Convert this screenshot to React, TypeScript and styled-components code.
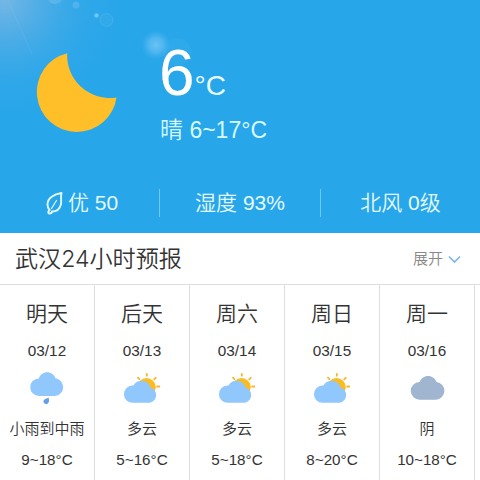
import React from 'react';
import styled, { createGlobalStyle } from 'styled-components';

const GlobalStyle = createGlobalStyle`
  * { box-sizing: border-box; }
  body {
    margin: 0;
    background: #fff;
    font-family: "Liberation Sans", "Noto Sans CJK SC", sans-serif;
    font-weight: 350;
    color: #333;
  }
`;

const Page = styled.main`
  width: 480px;
  height: 480px;
  overflow: hidden;
  display: flex;
  flex-direction: column;
`;

const Hero = styled.section`
  position: relative;
  height: 233px;
  flex: none;
  display: flex;
  flex-direction: column;
  background: #28a6ea;
  color: #e2faff;
`;

const Glow = styled.svg`
  position: absolute;
  inset: 0;
`;

const Current = styled.div`
  position: relative;
  height: 173px;
  display: flex;
  padding: 41px 0 0 36px;
`;

const Moon = styled.svg`
  width: 82px;
  height: 80px;
  margin: 12px 42px 0 0;
  flex: none;
`;

const Reading = styled.div`
  display: flex;
  flex-direction: column;
`;

const Temperature = styled.div`
  display: flex;
  align-items: baseline;
  height: 64px;
  line-height: 64px;
  font-size: 64px;
  color: #fff;
  margin-left: -1px;
`;

const Unit = styled.span`
  font-size: 28px;
  line-height: 28px;
  color: #e9fbff;
`;

const Summary = styled.div`
  margin-top: 10px;
  height: 30px;
  line-height: 30px;
  font-size: 23px;
  color: #d5faff;
  white-space: nowrap;
`;

const Stats = styled.div`
  position: relative;
  display: grid;
  grid-template-columns: 160px 161px 159px;
  height: 28px;
  margin-top: 16px;
`;

const Stat = styled.div`
  display: flex;
  align-items: center;
  justify-content: center;
  gap: 5px;
  line-height: 28px;
  font-size: 21px;
  white-space: nowrap;
  border-right: 1px solid #6ccaf5;
  &:first-child { padding-left: 5px; }
  &:last-child { border-right: 0; }
`;

const Header = styled.header`
  height: 52px;
  flex: none;
  display: flex;
  align-items: center;
  justify-content: space-between;
  padding: 1px 19px 0 15px;
  border-bottom: 1px solid #dedede;
`;

const Title = styled.h1`
  margin: 0;
  font-family: "Inter", "Noto Sans CJK SC", sans-serif;
  font-size: 23.1px;
  line-height: 32px;
  font-weight: 350;
`;

const Expand = styled.button`
  display: flex;
  align-items: center;
  gap: 5px;
  padding: 0;
  border: 0;
  background: none;
  font: inherit;
  font-size: 15px;
  line-height: 20px;
  color: #888;
`;

const Forecast = styled.section`
  display: grid;
  grid-template-columns: repeat(5, 95px) 5px;
  flex: 1;
`;

const Day = styled.article`
  display: flex;
  flex-direction: column;
  align-items: center;
  padding-top: 14px;
  border-right: 1px solid #dedede;
  white-space: nowrap;
`;

const DayName = styled.div`
  font-size: 21px;
  line-height: 30px;
`;

const DateLabel = styled.div`
  margin-top: 12px;
  font-size: 15.3px;
  line-height: 20px;
`;

const WeatherIcon = styled.svg`
  width: 40px;
  height: 36px;
  margin-top: 9px;
`;

const Condition = styled.div`
  margin-top: 13px;
  font-size: 15px;
  line-height: 20px;
`;

const Range = styled.div`
  margin-top: 11px;
  font-size: 15.2px;
  line-height: 20px;
`;

type Kind = 'rain' | 'partly' | 'overcast';

const CLOUD =
  'M10.5 24.5a8.8 8.8 0 0 1-.4-17.6C11.4 3.3 14.7.8 18.5.8s7 2.4 8.3 6a8.9 8.9 0 0 1-.6 17.7Z';

function Weather({ kind }: { kind: Kind }) {
  if (kind === 'partly') {
    return (
      <WeatherIcon viewBox="4.2 0 40 36">
        <g stroke="#fbb52a" strokeWidth="1.8" strokeLinecap="round">
          <path d="M29 3.800v1.900M20.200 7.600l1.400 1.500M38 7.800l-1.600 1.500M41.500 16.500h-2.200" />
        </g>
        <circle cx="28.700" cy="17.300" r="9.200" fill="#fbbc22" />
        <path
          d="M15 32.800A8.600 8.600 0 0 1 14.500 15.600h1.100C17.200 12.400 20.200 10.700 23.800 10.700c4.500 0 8.200 2.800 9 7 3.300 1 5.600 3.800 5.600 7.300 0 4.400-3.500 7.800-8 7.800Z"
          fill="#90c8fd"
        />
      </WeatherIcon>
    );
  }
  if (kind === 'overcast') {
    return (
      <WeatherIcon viewBox="0 0 40 36">
        <path transform="translate(2.200 5.200) scale(1.020 1)" d={CLOUD} fill="#9fb5d0" />
      </WeatherIcon>
    );
  }
  return (
    <WeatherIcon viewBox="0 0 40 36">
      <path transform="translate(1.700 1.500)" d={CLOUD} fill="#90c8fd" />
      <path d="M21.500 27.500c.9 2.400.9 6.500-2.200 6.600-3.500.1-3.800-4.500-.5-5.300 1-.2 1.900-.6 2.700-1.300Z" fill="#659eea" />
    </WeatherIcon>
  );
}

const days: { name: string; date: string; kind: Kind; text: string; range: string }[] = [
  { name: '明天', date: '03/12', kind: 'rain', text: '小雨到中雨', range: '9~18°C' },
  { name: '后天', date: '03/13', kind: 'partly', text: '多云', range: '5~16°C' },
  { name: '周六', date: '03/14', kind: 'partly', text: '多云', range: '5~18°C' },
  { name: '周日', date: '03/15', kind: 'partly', text: '多云', range: '8~20°C' },
  { name: '周一', date: '03/16', kind: 'overcast', text: '阴', range: '10~18°C' },
];

export default function App() {
  return (
    <Page>
      <GlobalStyle />
      <Hero>
        <Glow width="480" height="233" viewBox="0 0 480 233">
          <defs>
            <radialGradient id="corner" gradientUnits="userSpaceOnUse" cx="4" cy="0" r="125">
              <stop offset="0" stopColor="#8fbde4" stopOpacity=".75" />
              <stop offset=".3" stopColor="#74b4e2" stopOpacity=".5" />
              <stop offset=".65" stopColor="#4cace6" stopOpacity=".22" />
              <stop offset="1" stopColor="#28a6ea" stopOpacity="0" />
            </radialGradient>
            <radialGradient id="orb">
              <stop offset="0" stopColor="#8fd2f8" stopOpacity=".65" />
              <stop offset=".5" stopColor="#76c6f5" stopOpacity=".5" />
              <stop offset="1" stopColor="#50b8f0" stopOpacity="0" />
            </radialGradient>
          </defs>
          <rect width="480" height="233" fill="url(#corner)" />
          <path d="M8 0 32 54" stroke="#a8d8f5" strokeOpacity=".14" />
          <circle cx="55" cy="-4" r="8" fill="#9bd2f4" fillOpacity=".25" />
          <circle cx="76" cy="5" r="3.500" fill="#8bcdf5" fillOpacity=".3" />
          <circle cx="96.500" cy="15.500" r="3.500" fill="url(#orb)" />
          <circle cx="96.500" cy="15.500" r="1.800" fill="#6ccbfa" />
          <circle cx="106.500" cy="20" r="6.500" fill="#64b9ed" fillOpacity=".15" stroke="#77c5f1" strokeOpacity=".3" />
          <circle cx="156" cy="45" r="15" fill="url(#orb)" />
          <circle cx="177" cy="52" r="14" fill="#50b8f0" fillOpacity=".18" />
        </Glow>
        <Current>
          <Moon viewBox="36 53 82 80">
            <path d="M67.200 53.200A40 40 0 1 0 116.500 97.400A42.500 42.500 0 0 1 67.200 53.200Z" fill="#ffbf28" />
          </Moon>
          <Reading>
            <Temperature>6<Unit>°C</Unit></Temperature>
            <Summary>晴 6~17°C</Summary>
          </Reading>
        </Current>
        <Stats>
          <Stat>
            <svg width="17" height="24" viewBox="0 0 17 24" fill="none" stroke="currentColor" strokeWidth="1.900" strokeLinecap="round" strokeLinejoin="round">
              <path d="M15.500 2C8 3 1.500 7 1.500 13.500c0 3 1 4.600 2.200 5.700C2 20 1.700 22.500 3.500 22.500S6 21.500 6 20.500c4 0 7.700-2.400 8.900-7.100.9-3.800-.6-6.900.6-11.400Z" />
              <path d="M10.500 9.500 5.500 17.500" strokeWidth="1.200" />
            </svg>
            优 50
          </Stat>
          <Stat>湿度 93%</Stat>
          <Stat>北风 0级</Stat>
        </Stats>
      </Hero>
      <Header>
        <Title>武汉24小时预报</Title>
        <Expand>
          展开
          <svg width="13" height="9" viewBox="0 0 13 9" fill="none" stroke="#7fb6e6" strokeWidth="1.700">
            <path d="m1 1.500 5.500 5.500L12 1.500" />
          </svg>
        </Expand>
      </Header>
      <Forecast>
        {days.map((d) => (
          <Day key={d.date}>
            <DayName>{d.name}</DayName>
            <DateLabel>{d.date}</DateLabel>
            <Weather kind={d.kind} />
            <Condition>{d.text}</Condition>
            <Range>{d.range}</Range>
          </Day>
        ))}
      </Forecast>
    </Page>
  );
}
